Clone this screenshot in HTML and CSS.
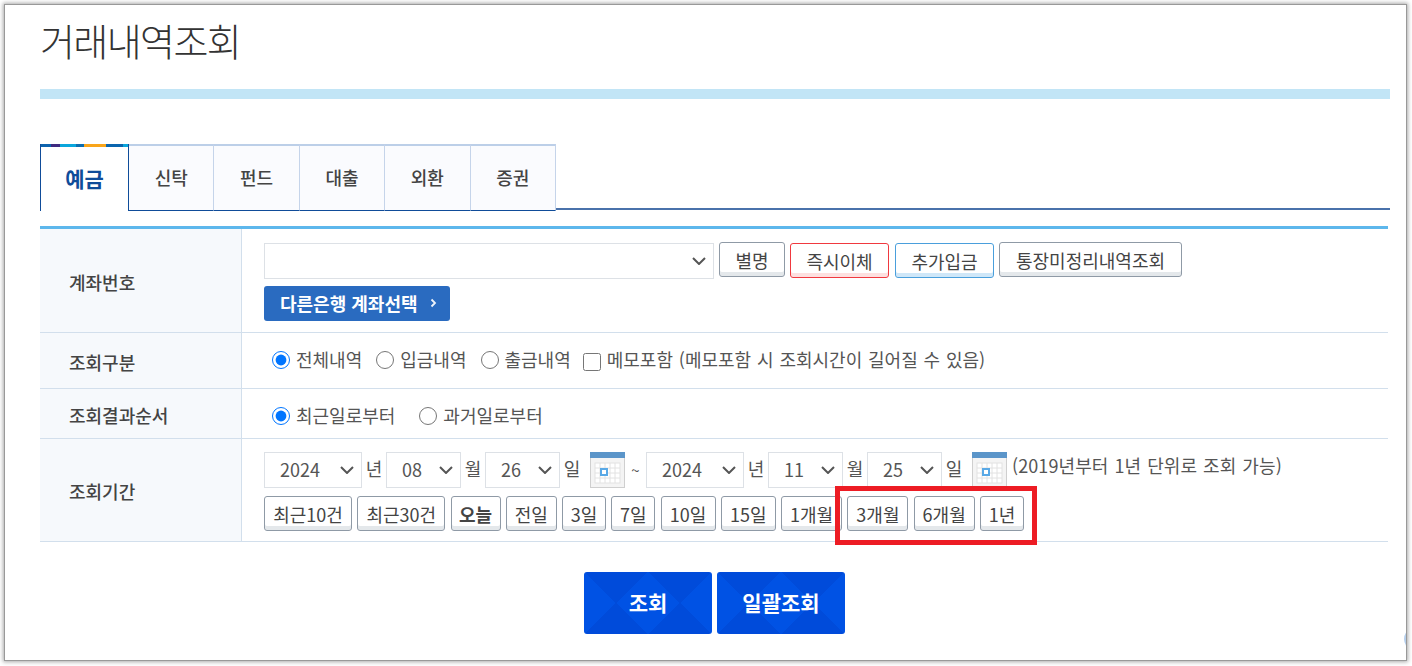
FILE: index.html
```html
<!DOCTYPE html>
<html lang="ko">
<head>
<meta charset="utf-8">
<title>거래내역조회</title>
<link rel="stylesheet" href="styles.css">
</head>
<body>
<main class="frame">
  <h1 class="title">거래내역조회</h1>
  <div class="title-bar"></div>

  <nav class="tabs">
    <a class="tab active">예금</a>
    <a class="tab">신탁</a>
    <a class="tab">펀드</a>
    <a class="tab">대출</a>
    <a class="tab">외환</a>
    <a class="tab">증권</a>
    <span class="tab-fill"></span>
  </nav>

  <section class="form">
    <div class="row row-account">
      <div class="label">계좌번호</div>
      <div class="cell">
        <div class="line line-account">
          <select class="sel sel-account"><option></option></select>
          <button class="btn btn-alias">별명</button>
          <button class="btn btn-red">즉시이체</button>
          <button class="btn btn-blue">추가입금</button>
          <button class="btn btn-book">통장미정리내역조회</button>
        </div>
        <button class="other-bank">다른은행 계좌선택
          <svg class="other-arrow" width="7" height="10" viewBox="0 0 7 10"><path d="M1.5 1.5 5 5 1.5 8.5" fill="none" stroke="#eef3fa" stroke-width="1.8"/></svg>
        </button>
      </div>
    </div>

    <div class="row row-type">
      <div class="label">조회구분</div>
      <div class="cell cell-inline cell-type">
        <label class="opt"><input type="radio" name="t" checked>전체내역</label>
        <label class="opt"><input type="radio" name="t">입금내역</label>
        <label class="opt"><input type="radio" name="t">출금내역</label>
        <label class="opt opt-check"><input type="checkbox">메모포함 (메모포함 시 조회시간이 길어질 수 있음)</label>
      </div>
    </div>

    <div class="row row-order">
      <div class="label">조회결과순서</div>
      <div class="cell cell-inline cell-order">
        <label class="opt"><input type="radio" name="o" checked>최근일로부터</label>
        <label class="opt"><input type="radio" name="o">과거일로부터</label>
      </div>
    </div>

    <div class="row row-period">
      <div class="label">조회기간</div>
      <div class="cell">
        <div class="line line-date">
          <select class="sel sel-year"><option>2024</option></select><span class="unit">년</span>
          <select class="sel sel-day"><option>08</option></select><span class="unit">월</span>
          <select class="sel sel-day"><option>26</option></select><span class="unit">일</span>
          <svg class="cal" width="35" height="36" viewBox="0 0 35 36">
            <rect x=".5" y=".5" width="34" height="35" fill="#f4f4f4" stroke="#cfcfcf"/>
            <rect width="35" height="6" fill="#5b95c9"/>
            <rect x="5" y="11" width="25" height="20" fill="#fff" stroke="#e2e2e2"/>
            <path d="M10 11v20M15 11v20M20 11v20M25 11v20M5 16h25M5 21h25M5 26h25" stroke="#e2e2e2"/>
            <rect x="11" y="17" width="6" height="6" fill="#fff" stroke="#5aa9e6" stroke-width="2"/>
          </svg>
          <span class="tilde">~</span>
          <select class="sel sel-year"><option>2024</option></select><span class="unit">년</span>
          <select class="sel sel-day"><option>11</option></select><span class="unit">월</span>
          <select class="sel sel-day"><option>25</option></select><span class="unit">일</span>
          <svg class="cal" width="35" height="36" viewBox="0 0 35 36">
            <rect x=".5" y=".5" width="34" height="35" fill="#f4f4f4" stroke="#cfcfcf"/>
            <rect width="35" height="6" fill="#5b95c9"/>
            <rect x="5" y="11" width="25" height="20" fill="#fff" stroke="#e2e2e2"/>
            <path d="M10 11v20M15 11v20M20 11v20M25 11v20M5 16h25M5 21h25M5 26h25" stroke="#e2e2e2"/>
            <rect x="11" y="17" width="6" height="6" fill="#fff" stroke="#5aa9e6" stroke-width="2"/>
          </svg>
          <span class="date-note">(2019년부터 1년 단위로 조회 가능)</span>
        </div>
        <div class="line line-quick">
          <button class="btn q q-xl">최근10건</button>
          <button class="btn q q-xl">최근30건</button>
          <button class="btn q q-today">오늘</button>
          <button class="btn q q-two">전일</button>
          <button class="btn q q-s">3일</button>
          <button class="btn q q-s">7일</button>
          <button class="btn q q-m">10일</button>
          <button class="btn q q-m">15일</button>
          <button class="btn q q-l">1개월</button>
          <button class="btn q q-l">3개월</button>
          <button class="btn q q-l">6개월</button>
          <button class="btn q q-s">1년</button>
        </div>
      </div>
    </div>
  </section>

  <div class="actions">
    <button class="action">조회</button>
    <button class="action">일괄조회</button>
  </div>

  <div class="highlight"></div>
  <div class="top-fab"></div>
</main>
</body>
</html>
```

FILE: styles.css
```css
* { box-sizing: border-box; }
html, body { margin: 0; height: 100%; background: #fff; overflow: hidden; }
body {
  font-family: "Noto Sans CJK KR", "Noto Sans", sans-serif;
  color: #555;
  font-size: 18px;
}
.frame {
  position: relative;
  width: 1401px;
  height: 655px;
  margin: 5px 0 0 5px;
  padding: 0 16px 0 35px;
  background: #fff;
  box-shadow: 0 0 0 1px #999, 0 0 4px 2px #aaa;
  overflow: hidden;
}
.title {
  margin: 0;
  height: 84px;
  padding-top: 9px;
  font-size: 38px;
  letter-spacing: -1.6px;
  line-height: 52px;
  font-weight: 300;
  color: #333;
}
.title-bar { height: 10px; background: #c2e5f6; }

.tabs { display: flex; height: 67px; margin-top: 45px; }
.tab {
  width: 85.4px;
  border-top: 2px solid #bccfe8;
  border-right: 1px solid #c5d4ea;
  border-bottom: 1px solid #0f4c99;
  background: #fafbfe;
  text-align: center;
  font-size: 18px;
  line-height: 62px;
  font-weight: 500;
  color: #444;
}
.tab.active {
  width: 89px;
  border: solid #0f4c99;
  border-width: 0 1px;
  padding-top: 3px;
  background: #fff linear-gradient(90deg,
    #0d63ad 0 10px, #3f2a80 10px 19px, #0aa6dc 19px 35px, #0d6db0 35px 43px,
    #f9a51a 43px 65px, #0b65ae 65px 82px, #0aa6dc 82px) no-repeat top / 100% 3px;
  font-size: 21px;
  font-weight: 700;
  color: #0f4c99;
}
.tab-fill { flex: 1; border-bottom: 2px solid #4a72ab; height: 66px; }

.form { margin: 15px 2px 0 0; border-top: 3px solid #5db7ec; }
.row { display: flex; border-bottom: 1px solid #d2dfec; }
.row-account { height: 104px; }
.row-type { height: 56px; }
.row-order { height: 50px; }
.row-period { height: 103px; }
.label {
  width: 202px;
  flex: none;
  display: flex;
  align-items: center;
  padding: 2px 0 0 29px;
  background: #f6f9fc;
  border-right: 1px solid #d2dfec;
  font-size: 18px;
  font-weight: 500;
  color: #444;
}
.cell { flex: 1; padding-left: 22px; }
.cell-inline { display: flex; align-items: center; padding-left: 30px; }
.cell-type { padding-bottom: 3px; }
.cell-order { padding-top: 2px; }

.line { display: flex; align-items: flex-start; }
.line-account { gap: 5px; padding-top: 13px; }
.sel {
  appearance: none;
  height: 36px;
  border: 1px solid #dde1e6;
  border-radius: 0;
  background: #fff url("data:image/svg+xml,%3Csvg xmlns='http://www.w3.org/2000/svg' width='14' height='8'%3E%3Cpath d='M1 1l6 6 6-6' fill='none' stroke='%23555' stroke-width='2'/%3E%3C/svg%3E") no-repeat right 7px center;
  color: #555;
  font: inherit;
  font-size: 18px;
  padding: 0 0 2px 15px;
}
.sel-account { width: 450px; margin-top: 1px; }
.sel-year { width: 98px; }
.sel-day { width: 75px; }

.btn {
  height: 35px;
  padding: 1px 0 0;
  border: 1px solid #8f9aa6;
  border-radius: 3px;
  background: #fff;
  box-shadow: inset 0 -4px 0 #e4e8eb;
  font: inherit;
  font-size: 18px;
  line-height: 28px;
  color: #444;
}
.btn-alias { width: 66px; }
.btn-red { width: 99px; margin-top: 1px; border-color: #f0393f; box-shadow: inset 0 -4px 0 #fde0e0; }
.btn-blue { width: 99px; margin: 1px 0 0 1px; border-color: #4a9fdc; box-shadow: inset 0 -4px 0 #cfe7f8; }
.btn-book { width: 183px; }

.other-bank {
  display: flex;
  align-items: center;
  width: 186px;
  height: 35px;
  margin-top: 7px;
  padding: 0 0 2px 16px;
  border: 0;
  border-radius: 3px;
  background: #2a6bc0;
  color: #fff;
  font: inherit;
  font-size: 18px;
  font-weight: 700;
}
.other-arrow { margin-left: 12px; }

.opt { display: flex; align-items: center; margin-right: 14px; color: #555; font-size: 18px; }
.opt input { width: 18px; height: 18px; margin: 2px 6px 0 0; accent-color: #0075ff; }
.opt-check { margin-left: -2px; word-spacing: .8px; }
.opt-check input { margin: 5px 6px 0 0; }
.cell-order .opt { margin-right: 24px; }

.line-date { padding-top: 13px; height: 57px; }
.unit { width: 24px; text-align: center; line-height: 32px; font-size: 18px; }
.cal { margin-left: 6px; flex: none; }
.tilde { width: 21px; text-align: center; line-height: 36px; font-size: 15px; }
.date-note { margin-left: 5px; line-height: 27px; font-size: 18px; letter-spacing: .1px; word-spacing: .8px; white-space: nowrap; }

.line-quick { gap: 5.27px; }
.q-xl { width: 88px; }
.q-today { width: 50px; font-weight: 700; }
.q-two { width: 51px; }
.q-s { width: 44px; }
.q-m { width: 55px; }
.q-l { width: 61px; }

.actions { display: flex; gap: 5px; margin: 30px 0 0 544px; }
.action {
  width: 128px;
  height: 62px;
  padding: 0 0 2px;
  border: 0;
  border-radius: 3px;
  background-color: #0052e4;
  background-image:
    linear-gradient(45deg, #004bda 25%, transparent 25% 75%, #004bda 75%),
    linear-gradient(135deg, #004bda 25%, transparent 25% 75%, #004bda 75%);
  background-size: 64px 62px;
  background-position: 32px 0;
  color: #fff;
  font: inherit;
  font-size: 21px;
  font-weight: 700;
}

.highlight {
  position: absolute;
  left: 830px;
  top: 481px;
  width: 202px;
  height: 59px;
  border: 5px solid #ed1c24;
}
.top-fab {
  position: absolute;
  left: 1399px;
  top: 621px;
  width: 30px;
  height: 26px;
  border-radius: 50%;
  background: #b6cfec;
}
```
